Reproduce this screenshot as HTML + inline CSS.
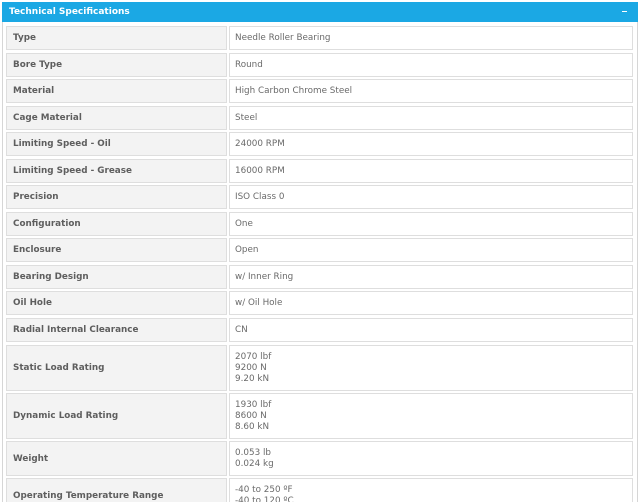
<!DOCTYPE html>
<html style="height:502px;overflow:hidden"><head><style>
body{margin:0;background:#fff;width:640px;height:502px;overflow:hidden;position:relative;font-family:"DejaVu Sans","Liberation Sans",sans-serif;}
.wrap{position:absolute;left:2px;top:2px;width:634px;height:520px;border:1px solid #d6d6d6;border-top:none;}
.hd{position:absolute;left:2px;top:2px;width:636px;height:20px;background:#1ba8e4;color:#fff;font-size:9px;font-weight:bold;line-height:20px;}
.hd span{padding-left:7px;}
.hd i{position:absolute;right:11px;top:9px;width:5px;height:1px;background:#fff;}
.c{position:absolute;border:1px solid #dedede;box-sizing:border-box;font-size:8.8px;display:flex;align-items:center;}
.l{left:6px;width:221px;background:#f3f3f3;color:#5e5e5e;font-weight:bold;padding-left:6px;}
.v{left:229px;width:404px;background:#fff;color:#6a6a6a;padding-left:5px;line-height:11px;}
</style></head><body>
<div class="wrap"></div>
<div class="hd"><span>Technical Specifications</span><i></i></div>

<div class="c l" style="top:26px;height:24px">Type</div><div class="c v" style="top:26px;height:24px">Needle Roller Bearing</div>
<div class="c l" style="top:53px;height:24px">Bore Type</div><div class="c v" style="top:53px;height:24px">Round</div>
<div class="c l" style="top:79px;height:24px">Material</div><div class="c v" style="top:79px;height:24px">High Carbon Chrome Steel</div>
<div class="c l" style="top:106px;height:24px">Cage Material</div><div class="c v" style="top:106px;height:24px">Steel</div>
<div class="c l" style="top:132px;height:24px">Limiting Speed - Oil</div><div class="c v" style="top:132px;height:24px">24000 RPM</div>
<div class="c l" style="top:159px;height:24px">Limiting Speed - Grease</div><div class="c v" style="top:159px;height:24px">16000 RPM</div>
<div class="c l" style="top:185px;height:24px">Precision</div><div class="c v" style="top:185px;height:24px">ISO Class 0</div>
<div class="c l" style="top:212px;height:24px">Configuration</div><div class="c v" style="top:212px;height:24px">One</div>
<div class="c l" style="top:238px;height:24px">Enclosure</div><div class="c v" style="top:238px;height:24px">Open</div>
<div class="c l" style="top:265px;height:24px">Bearing Design</div><div class="c v" style="top:265px;height:24px">w/ Inner Ring</div>
<div class="c l" style="top:291px;height:24px">Oil Hole</div><div class="c v" style="top:291px;height:24px">w/ Oil Hole</div>
<div class="c l" style="top:318px;height:24px">Radial Internal Clearance</div><div class="c v" style="top:318px;height:24px">CN</div>
<div class="c l" style="top:345px;height:46px">Static Load Rating</div><div class="c v" style="top:345px;height:46px">2070 lbf<br>9200 N<br>9.20 kN</div>
<div class="c l" style="top:393px;height:46px">Dynamic Load Rating</div><div class="c v" style="top:393px;height:46px">1930 lbf<br>8600 N<br>8.60 kN</div>
<div class="c l" style="top:441px;height:35px">Weight</div><div class="c v" style="top:441px;height:35px">0.053 lb<br>0.024 kg</div>
<div class="c l" style="top:478px;height:35px">Operating Temperature Range</div><div class="c v" style="top:478px;height:35px">-40 to 250 ºF<br>-40 to 120 ºC</div>
</body></html>
